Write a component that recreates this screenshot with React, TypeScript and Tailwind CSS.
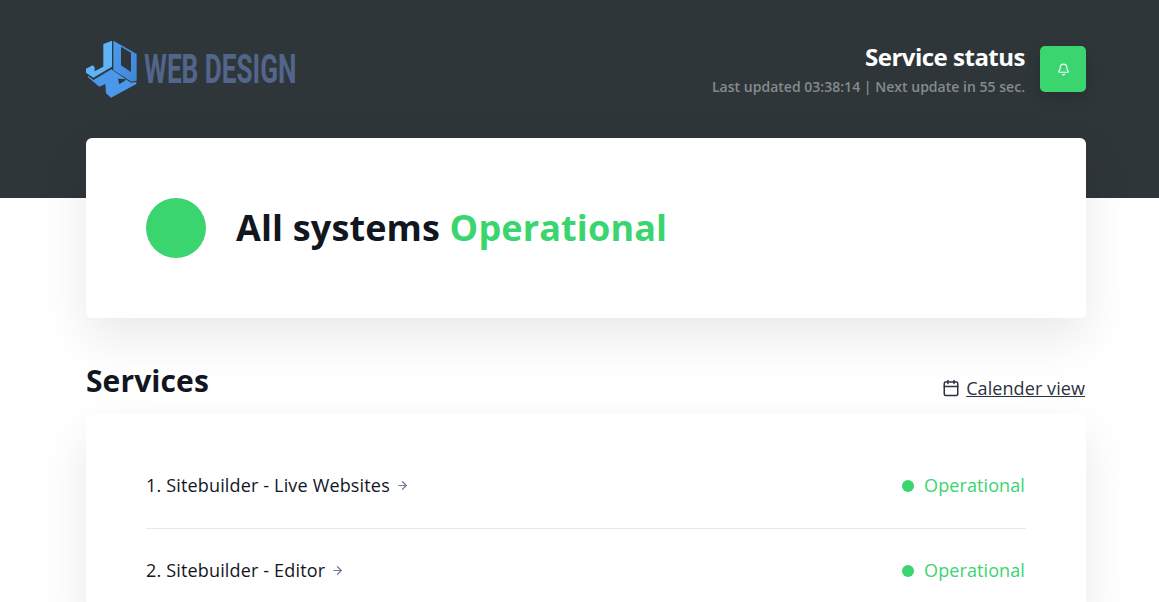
import { ArrowRight, Bell, Calendar } from "lucide-react";

function Logo() {
  return (
    <svg width="212" height="60" viewBox="0 0 212 60" className="block">
      <defs>
        <linearGradient id="boxFill" x1="0" y1="0" x2="1" y2="1">
          <stop offset="0" stopColor="#4a9cf0" />
          <stop offset="1" stopColor="#3f86d8" />
        </linearGradient>
      </defs>
      <svg x="0" y="0" width="54" height="60" viewBox="30 30 162 180">
        <path
          d="M82 42 L108 32 L108 110 L52 143 L30 128 L30 116 L50 106 L56 112 L56 124 L82 110 Z"
          fill="#5fb4f6"
        />
        <path
          d="M112 32 L182 72 L182 152 L166 155 L112 120 Z M135 50 L135 106 L165 126 L165 68 Z"
          fill="url(#boxFill)"
          fillRule="evenodd"
        />
        <path
          d="M36 137 L52 150 L106 118 L165 158 L181 156 L181 162 L105 203 L90 190 L88 162 L70 170 L36 142 Z M126 146 L153 148 L130 163 Z"
          fill="#4b97ea"
          fillRule="evenodd"
        />
      </svg>
      <text
        transform="translate(58 43) scale(0.654 1)"
        fontFamily="Roboto, sans-serif"
        fontSize="40"
        fontWeight="700"
        fill="#52668b"
      >
        WEB DESIGN
      </text>
    </svg>
  );
}

function ServiceRow({ name, bordered }: { name: string; bordered?: boolean }) {
  return (
    <div className={`flex items-center justify-between ${bordered ? "h-[86px] border-b border-[#e8e8e8]" : "h-[83px]"}`}>
      <div className="flex items-center gap-[6px] text-[18px] tracking-[0.16px] text-[#12161f]">
        <span>{name}</span>
        <ArrowRight className="h-[13px] w-[13px] text-[#6f7c99]" strokeWidth={2.25} />
      </div>
      <div className="mr-[1px] flex items-center gap-[10px] text-[18px] tracking-[0.1px] text-[#3ad56f]">
        <span className="h-[12px] w-[12px] rounded-full bg-[#3ad56f]" />
        <span>Operational</span>
      </div>
    </div>
  );
}

export default function App() {
  return (
    <div className="h-[602px] overflow-hidden bg-white font-['Open_Sans',sans-serif]">
      <header className="h-[198px] bg-[#2f363a] pl-[86px] pt-[40px]">
        <div className="flex w-[1000px] items-start justify-between">
          <Logo />
          <div className="flex items-start gap-[15px] pt-[4px]">
            <div className="flex flex-col items-end">
              <div className="text-[24px] font-bold leading-[26px] tracking-[-0.5px] text-white">Service status</div>
              <div className="mt-[8px] text-[14px] font-semibold leading-[18px] tracking-[0.02px] text-[#858b8d]">
                Last updated 03:38:14 | Next update in 55 sec.
              </div>
            </div>
            <button className="mt-[2px] flex h-[46px] w-[46px] items-center justify-center rounded-[5px] bg-[#3ad56f] shadow-[0_6px_14px_rgba(0,0,0,0.15)]">
              <Bell className="h-[13px] w-[13px] text-white" strokeWidth={2} />
            </button>
          </div>
        </div>
      </header>
      <main className="ml-[86px] -mt-[60px] w-[1000px]">
        <section className="relative flex h-[180px] items-center gap-[30px] rounded-[6px] bg-white px-[60px] shadow-[0_20px_50px_rgba(0,0,0,0.09)]">
          <span className="h-[60px] w-[60px] rounded-full bg-[#3ad56f]" />
          <h1 className="text-[36px] font-bold tracking-[0.14px] text-[#12161f]">
            All systems <span className="text-[#3ad56f]">Operational</span>
          </h1>
        </section>
        <div className="relative mt-[42px] flex h-[54px] items-start justify-between">
          <h2 className="text-[30px] font-bold leading-[42px] tracking-[0.1px] text-[#12161f]">Services</h2>
          <a className="mr-[1px] mt-[16px] flex items-center gap-[6px] text-[18px] leading-[24px] tracking-[0.08px] text-[#2c3240]">
            <Calendar className="h-[18px] w-[18px]" strokeWidth={2} />
            <span className="underline">Calender view</span>
          </a>
        </div>
        <section className="relative rounded-[6px] bg-white px-[60px] pt-[29px] shadow-[0_20px_50px_rgba(0,0,0,0.09)]">
          <ServiceRow name="1. Sitebuilder - Live Websites" bordered />
          <ServiceRow name="2. Sitebuilder - Editor" />
        </section>
      </main>
    </div>
  );
}
